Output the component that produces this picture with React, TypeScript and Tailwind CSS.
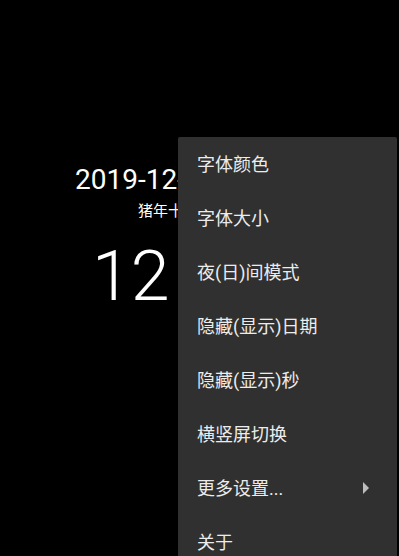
import React from "react";

const items = [
  "字体颜色",
  "字体大小",
  "夜(日)间模式",
  "隐藏(显示)日期",
  "隐藏(显示)秒",
  "横竖屏切换",
  "更多设置...",
  "关于",
];

export default function App() {
  return (
    <div className="relative h-[556px] w-full overflow-hidden bg-black text-white">
      <div className="flex flex-col pt-[164px]">
        <div className="ml-[75px] whitespace-nowrap font-['Roboto','Noto_Sans_CJK_SC',sans-serif] text-[28px] leading-[32px]">
          2019-12-25 星期三
        </div>
        <div className="ml-[138px] mt-[4px] whitespace-nowrap font-['Noto_Sans_CJK_SC',sans-serif] text-[15px] leading-[20px]">
          猪年十一月三十
        </div>
        <div className="ml-[92px] mt-[21px] flex whitespace-nowrap font-['Roboto',sans-serif] text-[70px] font-light leading-[70px]">
          <span>12</span>
          <span className="ml-[12px]">:34</span>
        </div>
      </div>

      <div className="absolute left-[178px] top-[137px] w-[219px] rounded-[2px] bg-[#303030] font-['Roboto','Noto_Sans_CJK_SC',sans-serif] shadow-lg">
        {items.map((t, i) => (
          <div
            key={t}
            className="flex h-[54px] items-center justify-between pl-[19px] pr-[28px] text-[18px] text-[#ececec]"
          >
            <span>{t}</span>
            {i === 6 && (
              <svg width="6" height="12" viewBox="0 0 6 12">
                <path d="M0 0 L6 6 L0 12 Z" fill="#bdbdbd" />
              </svg>
            )}
          </div>
        ))}
      </div>
    </div>
  );
}
